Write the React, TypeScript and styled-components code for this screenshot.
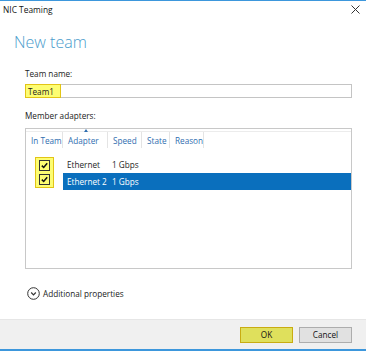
import React from 'react';
import styled, { createGlobalStyle } from 'styled-components';

const Global = createGlobalStyle`
  html, body { margin: 0; padding: 0; background: #ffffff; }
  body { font-family: "Open Sans", "Noto Sans", sans-serif; }
`;

const Window = styled.div`
  width: 366px;
  height: 351px;
  display: flex;
  flex-direction: column;
  background: #ffffff;
  border-top: 1px solid #3d97dc;
  border-bottom: 2px solid #3d97dc;
  box-sizing: border-box;
  color: #1e1e1e;
  font-size: 8.2px;
  white-space: nowrap;
`;

const TitleBar = styled.div`
  height: 16px;
  display: flex;
  align-items: center;
  justify-content: space-between;
  padding: 0 6px 0 3px;
`;

const TitleText = styled.span`
  font-size: 8.4px;
  color: #111;
`;

const Close = styled.svg`
  width: 9px;
  height: 9px;
`;

const Heading = styled.h1`
  margin: 15px 0 0 14px;
  font-size: 16px;
  font-weight: 300;
  color: #4a9ccc;
  line-height: 20px;
`;

const Body = styled.div`
  flex: 1;
  padding: 16px 14px 0 25px;
  display: flex;
  flex-direction: column;
`;

const Label = styled.div`
  line-height: 12px;
  color: #222;
  margin-bottom: ${p => p.$gap ?? 4}px;
`;

const Input = styled.div`
  height: 14px;
  border: 1px solid #c4c4c4;
  box-sizing: border-box;
  display: flex;
  align-items: stretch;
  margin-bottom: 12px;
`;

const Marked = styled.span`
  display: flex;
  align-items: center;
  padding: 0 6px 0 2px;
  margin: -1px 0 -1px -1px;
  background: #fdfd72;
  border: 1px solid #e2c416;
`;

const Table = styled.div`
  height: 141px;
  border: 1px solid #c8c8c8;
  box-sizing: border-box;
  display: flex;
  flex-direction: column;
`;

const HeaderRow = styled.div`
  margin-top: 2px;
  height: 16px;
  display: grid;
  grid-template-columns: 37px 45px 34px 28px 34px;
  border-top: 1px solid #ececec;
`;

const HeadCell = styled.div`
  position: relative;
  display: flex;
  align-items: center;
  padding-left: 5px;
  color: #2f6eb0;
  border-right: 1px solid #e4e4e4;
`;

const SortArrow = styled.span`
  position: absolute;
  top: -3px;
  left: 21px;
  width: 0;
  height: 0;
  border-left: 2.5px solid transparent;
  border-right: 2.5px solid transparent;
  border-bottom: 3px solid #2f6eb0;
`;

const Rows = styled.div`
  margin-top: 8px;
  display: grid;
  grid-template-columns: 37px 1fr;
`;

const CheckColumn = styled.div`
  display: flex;
  justify-content: center;
  padding-top: 1px;
`;

const CheckHighlight = styled.div`
  width: 19px;
  height: 31px;
  box-sizing: border-box;
  background: #fdfd72;
  border: 1px solid #e2c416;
  display: flex;
  flex-direction: column;
  align-items: center;
  justify-content: space-between;
  padding: 2px 0;
`;

const Box = styled.div`
  width: 11px;
  height: 11px;
  box-sizing: border-box;
  border: 1px solid #333;
  display: flex;
  align-items: center;
  justify-content: center;
`;

const AdapterRow = styled.div`
  height: 17px;
  display: grid;
  grid-template-columns: 45px 1fr;
  align-items: center;
  background: ${p => (p.$selected ? '#0a6fbd' : 'transparent')};
  color: ${p => (p.$selected ? '#ffffff' : '#1e1e1e')};
  padding-left: 4px;
  box-sizing: border-box;
`;

const Expander = styled.div`
  display: flex;
  align-items: center;
  gap: 3px;
  margin-top: 18px;
  margin-left: 2px;
  color: #222;
`;

const Footer = styled.div`
  height: 30px;
  background: #f0f0f0;
  border-top: 1px solid #e6e6e6;
  display: flex;
  align-items: center;
  justify-content: flex-end;
  gap: 6px;
  padding-right: 14px;
  box-sizing: border-box;
`;

const Button = styled.button`
  width: 53px;
  height: 16px;
  padding: 0;
  font-family: inherit;
  font-size: 8.2px;
  color: #111;
  background: ${p => (p.$marked ? '#dfe05c' : '#e1e1e1')};
  border: 1px solid ${p => (p.$marked ? '#c9ac12' : '#adadad')};
`;

const Check = () => (
  <Box>
    <svg width="7" height="7" viewBox="0 0 7 7">
      <path d="M0.8 3.6 L2.7 5.5 L6.2 1.2" fill="none" stroke="#111" strokeWidth="1.5" />
    </svg>
  </Box>
);

const adapters = [
  { name: 'Ethernet', speed: '1 Gbps', selected: false },
  { name: 'Ethernet 2', speed: '1 Gbps', selected: true },
];

const App: React.FC = () => {
  return (
    <>
      <Global />
      <Window>
        <TitleBar>
          <TitleText>NIC Teaming</TitleText>
          <Close viewBox="0 0 9 9">
            <path d="M0.5 0.5 L8.5 8.5 M8.5 0.5 L0.5 8.5" stroke="#333" strokeWidth="1" />
          </Close>
        </TitleBar>
        <Heading>New team</Heading>
        <Body>
          <Label>Team name:</Label>
          <Input>
            <Marked>Team1</Marked>
          </Input>
          <Label $gap={6}>Member adapters:</Label>
          <Table>
            <HeaderRow>
              <HeadCell>In Team</HeadCell>
              <HeadCell>
                <SortArrow />
                Adapter
              </HeadCell>
              <HeadCell>Speed</HeadCell>
              <HeadCell>State</HeadCell>
              <HeadCell>Reason</HeadCell>
            </HeaderRow>
            <Rows>
              <CheckColumn>
                <CheckHighlight>
                  <Check />
                  <Check />
                </CheckHighlight>
              </CheckColumn>
              <div>
                {adapters.map(a => (
                  <AdapterRow key={a.name} $selected={a.selected}>
                    <span>{a.name}</span>
                    <span>{a.speed}</span>
                  </AdapterRow>
                ))}
              </div>
            </Rows>
          </Table>
          <Expander>
            <svg width="13" height="13" viewBox="0 0 13 13">
              <circle cx="6.5" cy="6.5" r="5.8" fill="none" stroke="#333" strokeWidth="1" />
              <path d="M4.2 5.5 L6.5 7.8 L8.8 5.5" fill="none" stroke="#333" strokeWidth="1.2" />
            </svg>
            Additional properties
          </Expander>
        </Body>
        <Footer>
          <Button $marked>OK</Button>
          <Button>Cancel</Button>
        </Footer>
      </Window>
    </>
  );
};

export default App;
